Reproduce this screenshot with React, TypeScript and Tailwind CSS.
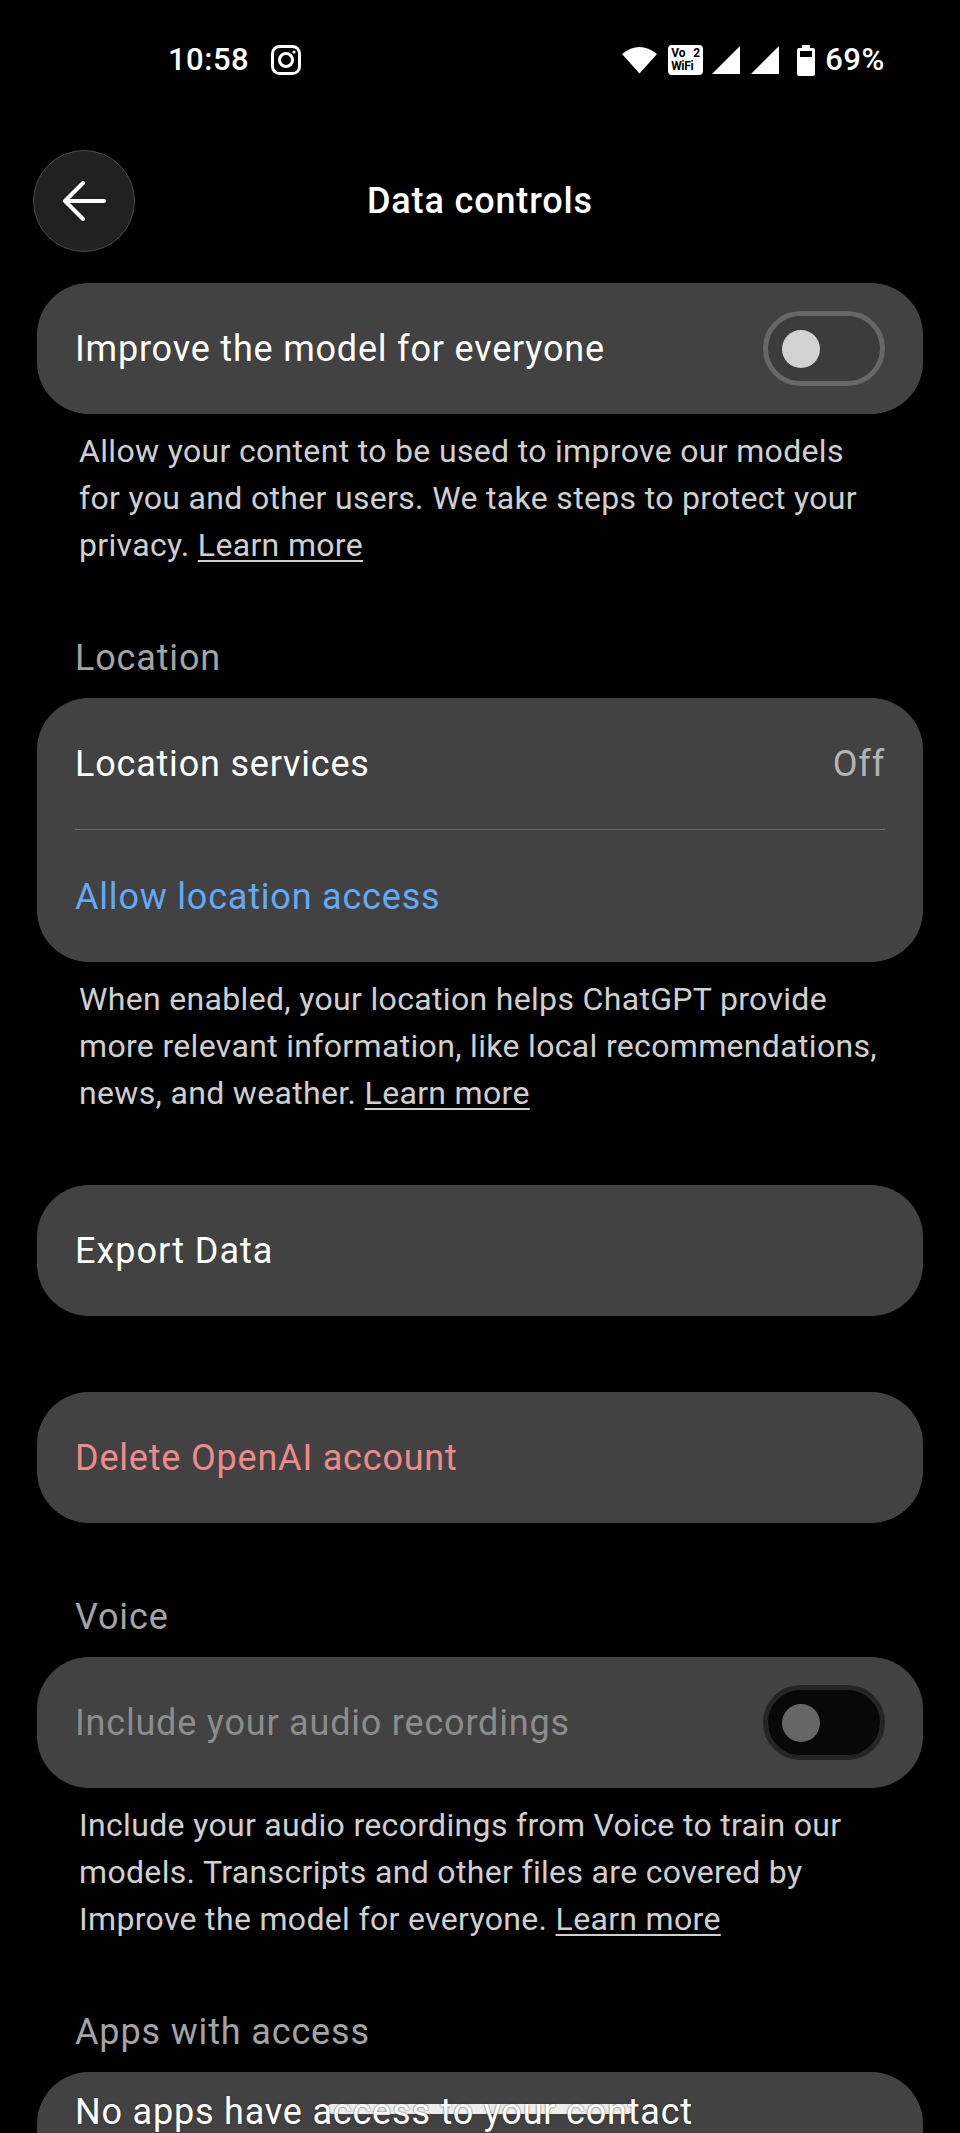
function Toggle({ disabled }: { disabled?: boolean }) {
  return (
    <div
      className={`w-[122px] h-[75px] rounded-full border-[5px] flex items-center pl-[14px] ${
        disabled ? "bg-[#080808] border-[#252525]" : "bg-[#3c3c3c] border-[#676767]"
      }`}
    >
      <div className={`w-[38px] h-[38px] rounded-full ${disabled ? "bg-[#666666]" : "bg-[#d2d2d2]"}`} />
    </div>
  );
}

function Note({ children }: { children: React.ReactNode }) {
  return (
    <p className="mt-[14px] pl-[42px] pr-[30px] text-[32px] leading-[47px] tracking-[0.33px] text-[#cfcfcf]">
      {children}
    </p>
  );
}

function LearnMore() {
  return <span className="underline decoration-2 underline-offset-4">Learn more</span>;
}

function SectionLabel({ children }: { children: React.ReactNode }) {
  return <div className="pl-[38px] text-[36px] leading-[48px] tracking-[0.85px] text-[#a3a3a3]">{children}</div>;
}

export default function App() {
  return (
    <div
      className="relative w-[960px] h-[2133px] overflow-hidden bg-black text-white"
      style={{ fontFamily: "Roboto, sans-serif" }}
    >
      {/* Status bar */}
      <div className="h-[120px] pl-[168px] pr-[75px] flex items-center justify-between">
        <div className="flex items-center gap-[22px]">
          <span className="text-[31px] font-medium tracking-[0.5px]">10:58</span>
          <svg width="30" height="30" viewBox="0 0 30 30" fill="none" stroke="white" strokeWidth="3">
            <rect x="1.5" y="1.5" width="27" height="27" rx="7" />
            <circle cx="15" cy="15" r="6.5" />
            <circle cx="23" cy="7" r="1.6" fill="white" stroke="none" />
          </svg>
        </div>
        <div className="flex items-center">
          <svg width="35" height="28" viewBox="0 0 35 28" className="mr-[11px]">
            <path d="M17.5 27.5 L0 8 Q17.5 -6 35 8 Z" fill="white" />
          </svg>
          <div className="w-[35px] h-[30px] rounded-[4px] bg-white text-black text-[12px] font-bold leading-[13px] px-[3px] py-[2px] mr-[9px]">
            <div className="flex justify-between">
              <span>Vo</span>
              <span>2</span>
            </div>
            <div className="tracking-[-0.3px]">WiFi</div>
          </div>
          <svg width="28" height="28" viewBox="0 0 28 28" className="mr-[11px]">
            <path d="M0 28 L28 0 V28 Z" fill="white" />
          </svg>
          <svg width="28" height="28" viewBox="0 0 28 28" className="mr-[18px]">
            <path d="M0 28 L28 0 V28 Z" fill="white" />
          </svg>
          <svg width="18" height="31" viewBox="0 0 18 31" className="mr-[10px]">
            <path
              fillRule="evenodd"
              d="M5 0 H13 V3 H16 Q18 3 18 5 V29 Q18 31 16 31 H2 Q0 31 0 29 V5 Q0 3 2 3 H5 Z M3 6 V12 H15 V6 Z"
              fill="white"
            />
          </svg>
          <span className="text-[31px] font-medium tracking-[0.6px]">69%</span>
        </div>
      </div>

      {/* Header */}
      <div className="relative h-[102px] mt-[30px] ml-[33px] flex items-center">
        <div className="w-[102px] h-[102px] rounded-full bg-[#212121] border border-[#4a4a4a] flex items-center justify-center">
          <svg width="44" height="40" viewBox="0 0 44 40" fill="none" stroke="white" strokeWidth="4" strokeLinecap="round" strokeLinejoin="round">
            <path d="M42 20 H3 M21 2 L3 20 L21 38" />
          </svg>
        </div>
        <div className="absolute left-[-33px] w-[960px] text-center text-[36px] font-medium tracking-[0.85px]">
          Data controls
        </div>
      </div>

      <div className="pt-[31px] px-[37px]">
        <div className="h-[131px] rounded-[52px] bg-[#424242] px-[38px] flex items-center justify-between">
          <span className="text-[36px] tracking-[0.8px]">Improve the model for everyone</span>
          <Toggle />
        </div>
        <Note>
          Allow your content to be used to improve our models for you and other users. We take steps to protect your
          privacy. <LearnMore />
        </Note>

        <div className="mt-[65px]">
          <SectionLabel>Location</SectionLabel>
        </div>
        <div className="mt-[16px] rounded-[52px] bg-[#424242] px-[38px]">
          <div className="h-[132px] flex items-center justify-between border-b border-[#6a6a6a]">
            <span className="text-[36px] tracking-[0.8px]">Location services</span>
            <span className="text-[36px] tracking-[0.8px] text-[#b4b4b4]">Off</span>
          </div>
          <div className="h-[132px] pt-[2px] flex items-center text-[36px] tracking-[0.8px] text-[#63a9f5]">
            Allow location access
          </div>
        </div>
        <Note>
          When enabled, your location helps ChatGPT provide more relevant information, like local recommendations,
          news, and weather. <LearnMore />
        </Note>

        <div className="mt-[68px] h-[131px] rounded-[52px] bg-[#424242] px-[38px] flex items-center text-[36px] tracking-[1px]">
          Export Data
        </div>
        <div className="mt-[76px] h-[131px] rounded-[52px] bg-[#424242] px-[38px] flex items-center text-[36px] tracking-[0.8px] text-[#f08a8a]">
          Delete OpenAI account
        </div>

        <div className="mt-[70px]">
          <SectionLabel>Voice</SectionLabel>
        </div>
        <div className="mt-[16px] h-[131px] rounded-[52px] bg-[#424242] px-[38px] flex items-center justify-between">
          <span className="text-[36px] tracking-[0.8px] text-[#8c8c8c]">Include your audio recordings</span>
          <Toggle disabled />
        </div>
        <Note>
          Include your audio recordings from Voice to train our models. Transcripts and other files are covered by
          Improve the model for everyone. <LearnMore />
        </Note>

        <div className="mt-[65px]">
          <SectionLabel>Apps with access</SectionLabel>
        </div>
        <div className="mt-[16px] h-[131px] rounded-[52px] bg-[#424242] px-[38px] pt-[13px] text-[36px] tracking-[0.8px]">
          <span className="relative z-10 [text-shadow:0_0_2px_#333333]">No apps have access to your contact</span>
        </div>
      </div>

      {/* Gesture pill, the last row of text sits on it */}
      <div className="absolute left-[327px] top-[2104px] w-[306px] h-[10px] rounded-full bg-[#eeeeee]" />
    </div>
  );
}
